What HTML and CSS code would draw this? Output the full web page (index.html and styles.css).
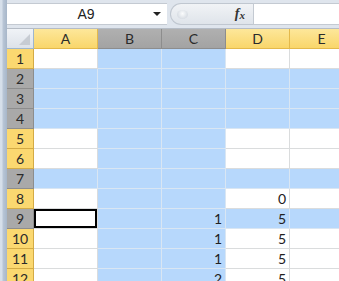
FILE: index.html
```html
<!DOCTYPE html>
<html lang="en">
<head>
    <meta charset="UTF-8">
    <title>Book1 - Excel</title>
    <link rel="stylesheet" href="styles.css">
</head>
<body>
    <div class="window">
        <div class="side-strip"></div>
        <div class="workbook">
            <!-- Formula bar -->
            <div class="formula-bar">
                <div class="name-box">
                    <span class="name-value">A9</span>
                    <span class="drop-arrow"></span>
                </div>
                <div class="fx-pill">
                    <span class="pill-knob"></span>
                    <span class="fx">f<sub>x</sub></span>
                </div>
                <div class="formula-input"></div>
            </div>

            <!-- Sheet grid -->
            <div class="sheet">
                <div class="corner"><span class="corner-tri"></span></div>
                <div class="col-head hl">A</div>
                <div class="col-head hs">B</div>
                <div class="col-head hs">C</div>
                <div class="col-head hl">D</div>
                <div class="col-head hl">E</div>

                <div class="row-head hl">1</div>
                <div class="cell"></div><div class="cell sel"></div><div class="cell sel"></div><div class="cell"></div><div class="cell"></div>

                <div class="row-head hs">2</div>
                <div class="cell sel"></div><div class="cell sel"></div><div class="cell sel"></div><div class="cell sel"></div><div class="cell sel"></div>

                <div class="row-head hs">3</div>
                <div class="cell sel"></div><div class="cell sel"></div><div class="cell sel"></div><div class="cell sel"></div><div class="cell sel"></div>

                <div class="row-head hs">4</div>
                <div class="cell sel"></div><div class="cell sel"></div><div class="cell sel"></div><div class="cell sel"></div><div class="cell sel"></div>

                <div class="row-head hl">5</div>
                <div class="cell"></div><div class="cell sel"></div><div class="cell sel"></div><div class="cell"></div><div class="cell"></div>

                <div class="row-head hl">6</div>
                <div class="cell"></div><div class="cell sel"></div><div class="cell sel"></div><div class="cell"></div><div class="cell"></div>

                <div class="row-head hs">7</div>
                <div class="cell sel"></div><div class="cell sel"></div><div class="cell sel"></div><div class="cell sel"></div><div class="cell sel"></div>

                <div class="row-head hl">8</div>
                <div class="cell"></div><div class="cell sel"></div><div class="cell sel"></div><div class="cell">0</div><div class="cell"></div>

                <div class="row-head hs">9</div>
                <div class="cell active"></div><div class="cell sel"></div><div class="cell sel">1</div><div class="cell sel">5</div><div class="cell sel"></div>

                <div class="row-head hl">10</div>
                <div class="cell"></div><div class="cell sel"></div><div class="cell sel">1</div><div class="cell">5</div><div class="cell"></div>

                <div class="row-head hl">11</div>
                <div class="cell"></div><div class="cell sel"></div><div class="cell sel">1</div><div class="cell">5</div><div class="cell"></div>

                <div class="row-head hl">12</div>
                <div class="cell"></div><div class="cell sel"></div><div class="cell sel">2</div><div class="cell">5</div><div class="cell"></div>
            </div>
        </div>
    </div>
</body>
</html>
```

FILE: styles.css
```css
* {
    box-sizing: border-box;
}

html, body {
    margin: 0;
    height: 100%;
    overflow: hidden;
}

body {
    font-family: 'Lato', 'Liberation Sans', sans-serif;
    font-size: 14px;
    color: #222;
    background: #fff;
}

.window {
    display: flex;
    height: 100%;
}

.side-strip {
    width: 7px;
    flex: none;
    background: linear-gradient(to right, #d6dfea 0, #d6dfea 2px, #b9c6d6 3px, #a7b6c9 100%);
}

.workbook {
    flex: 1;
    min-width: 0;
}

/* Formula bar */
.formula-bar {
    display: flex;
    align-items: stretch;
    height: 29px;
    padding: 3px 0 3px 0;
    background: #dfe5ed;
    border-bottom: 1px solid #b5bcc6;
}

.name-box {
    display: flex;
    align-items: center;
    width: 160px;
    background: #fff;
    border-top: 1px solid #c4cad2;
    border-bottom: 1px solid #c4cad2;
}

.name-value {
    flex: 1;
    text-align: center;
    padding-left: 12px;
    font-family: 'Liberation Sans', sans-serif;
    font-size: 14px;
}

.drop-arrow {
    width: 0;
    height: 0;
    border-left: 4px solid transparent;
    border-right: 4px solid transparent;
    border-top: 4px solid #222;
    margin-right: 6px;
}

.fx-pill {
    display: flex;
    align-items: center;
    justify-content: space-between;
    width: 83px;
    margin-left: 3px;
    padding: 0 8px 0 6px;
    background: linear-gradient(#f1f3f6, #dfe4ea);
    border: 1px solid #c0c7d0;
    border-right: none;
    border-radius: 11px 0 0 11px;
}

.pill-knob {
    width: 11px;
    height: 9px;
    border-radius: 50%;
    background: radial-gradient(circle at 50% 40%, #fbfcfd, #c9d0d9);
}

.fx {
    font-family: 'Liberation Serif', serif;
    font-style: italic;
    font-weight: bold;
    font-size: 14px;
    color: #333;
}

.fx sub {
    font-size: 11px;
    vertical-align: -1px;
}

.formula-input {
    flex: 1;
    background: #fff;
    border: 1px solid #c4cad2;
    border-right: none;
}

/* Sheet */
.sheet {
    display: grid;
    grid-template-columns: 27px 64px 64px 64px 64px 64px;
    grid-auto-rows: 20px;
}

.corner {
    position: relative;
    background: linear-gradient(#f0f3f7, #dde2e9);
    border-right: 1px solid #9eb6ce;
    border-bottom: 1px solid #9eb6ce;
}

.corner-tri {
    position: absolute;
    right: 3px;
    bottom: 3px;
    width: 0;
    height: 0;
    border-left: 11px solid transparent;
    border-bottom: 11px solid #c7ccd3;
}

.col-head, .row-head {
    display: flex;
    align-items: center;
    justify-content: center;
    color: #2b2b2b;
}

.col-head {
    border-right: 1px solid #9b9b9b;
    border-bottom: 1px solid #9b9b9b;
}

.row-head {
    border-right: 1px solid #9b9b9b;
    border-bottom: 1px solid #9b9b9b;
}

.col-head.hl {
    background: linear-gradient(#fde79a, #f9d66b);
    border-color: #e4b94b;
}

.row-head.hl {
    background: #fbd870;
    border-color: #d4ab45;
}

.col-head.hs {
    background: linear-gradient(#b0b0b0, #a3a3a3);
    border-color: #8d8d8d;
}

.row-head.hs {
    background: #a9a9a9;
    border-color: #8d8d8d;
}

.cell {
    padding: 0 3px;
    display: flex;
    align-items: center;
    justify-content: flex-end;
    background: #fff;
    border-right: 1px solid #dadcdd;
    border-bottom: 1px solid #dadcdd;
}

.cell.sel {
    background: #b7d8fc;
    border-color: #d9e6f3;
}

.cell.active {
    box-shadow: inset 0 0 0 2px #000;
}
```
